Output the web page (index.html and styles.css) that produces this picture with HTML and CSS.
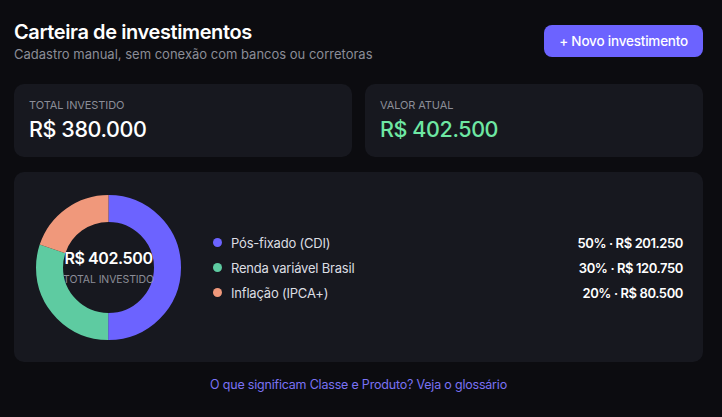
FILE: index.html
```html
<!DOCTYPE html>
<html lang="pt-BR">
<head>
<meta charset="utf-8">
<title>Carteira de investimentos</title>
<link rel="stylesheet" href="styles.css">
</head>
<body>
<div class="page">
  <header class="header">
    <div class="heading">
      <h1 class="title">Carteira de investimentos</h1>
      <p class="subtitle">Cadastro manual, sem conexão com bancos ou corretoras</p>
    </div>
    <button class="btn-primary">+ Novo investimento</button>
  </header>

  <section class="stats">
    <div class="card stat">
      <div class="stat-label">TOTAL INVESTIDO</div>
      <div class="stat-value">R$ 380.000</div>
    </div>
    <div class="card stat">
      <div class="stat-label">VALOR ATUAL</div>
      <div class="stat-value positive">R$ 402.500</div>
    </div>
  </section>

  <section class="card allocation">
    <div class="donut">
      <svg class="donut-svg" width="145" height="145" viewBox="0 0 145 145">
        <g transform="rotate(-90 72.5 72.5)">
          <circle cx="72.5" cy="72.5" r="59" fill="none" stroke="#6c63ff" stroke-width="27" stroke-dasharray="185.35 370.7" stroke-dashoffset="0"/>
          <circle cx="72.5" cy="72.5" r="59" fill="none" stroke="#5ecba1" stroke-width="27" stroke-dasharray="111.21 370.7" stroke-dashoffset="-185.35"/>
          <circle cx="72.5" cy="72.5" r="59" fill="none" stroke="#f0987b" stroke-width="27" stroke-dasharray="74.14 370.7" stroke-dashoffset="-296.56"/>
        </g>
      </svg>
      <div class="donut-center">
        <div class="donut-value">R$ 402.500</div>
        <div class="donut-label">TOTAL INVESTIDO</div>
      </div>
    </div>
    <ul class="legend">
      <li class="legend-row">
        <span class="dot dot-purple"></span>
        <span class="legend-name">Pós-fixado (CDI)</span>
        <span class="legend-value">50% · R$ 201.250</span>
      </li>
      <li class="legend-row">
        <span class="dot dot-green"></span>
        <span class="legend-name">Renda variável Brasil</span>
        <span class="legend-value">30% · R$ 120.750</span>
      </li>
      <li class="legend-row">
        <span class="dot dot-salmon"></span>
        <span class="legend-name">Inflação (IPCA+)</span>
        <span class="legend-value">20% · R$ 80.500</span>
      </li>
    </ul>
  </section>

  <footer class="footer">
    <a class="glossary-link" href="#">O que significam Classe e Produto? Veja o glossário</a>
  </footer>
</div>
</body>
</html>
```

FILE: styles.css
```css
* { box-sizing: border-box; }

html, body {
  margin: 0;
  padding: 0;
  background: #0c0c10;
}

body {
  font-family: Inter, "Noto Sans", sans-serif;
  color: #f4f4f6;
}

.page {
  padding: 20px 19px 0 14px;
}

.header {
  display: flex;
  justify-content: space-between;
  align-items: flex-start;
}

.title {
  margin: 0;
  font-size: 20px;
  font-weight: 600;
  line-height: 24px;
  letter-spacing: -0.4px;
  color: #ffffff;
}

.subtitle {
  margin: 2px 0 0;
  font-size: 13px;
  line-height: 17px;
  color: #8b8d97;
  letter-spacing: 0;
}

.btn-primary {
  margin-top: 5px;
  height: 32px;
  padding: 0 15px;
  border: none;
  border-radius: 8px;
  background: #6c63ff;
  color: #ffffff;
  font-family: inherit;
  font-size: 13.5px;
  font-weight: 500;
  letter-spacing: -0.2px;
}

.stats {
  display: grid;
  grid-template-columns: 1fr 1fr;
  gap: 13px;
  margin-top: 21px;
}

.card {
  background: #17181f;
  border-radius: 10px;
}

.stat {
  height: 73px;
  padding: 14px 15px;
}

.stat-label {
  font-size: 11px;
  line-height: 14px;
  color: #8b8d97;
  letter-spacing: -0.1px;
}

.stat-value {
  margin-top: 4px;
  font-size: 21.5px;
  font-weight: 500;
  line-height: 26px;
  letter-spacing: -0.4px;
  color: #ffffff;
}

.stat-value.positive {
  color: #6ee7a3;
}

.allocation {
  margin-top: 15px;
  display: flex;
  align-items: center;
  padding: 23px 20px 22px 22px;
}

.donut {
  position: relative;
  width: 145px;
  height: 145px;
  flex: 0 0 145px;
}

.donut-svg {
  display: block;
}

.donut-center {
  position: absolute;
  inset: 0;
  display: flex;
  flex-direction: column;
  align-items: center;
  justify-content: center;
  padding-bottom: 2px;
}

.donut-value {
  font-size: 16px;
  font-weight: 600;
  line-height: 20px;
  color: #ffffff;
  letter-spacing: -0.4px;
}

.donut-label {
  margin-top: 5px;
  font-size: 10.5px;
  line-height: 13px;
  color: #8b8d97;
  letter-spacing: -0.1px;
  white-space: nowrap;
}

.legend {
  list-style: none;
  margin: 0 0 0 32px;
  padding: 0;
  flex: 1;
  display: flex;
  flex-direction: column;
  gap: 5px;
}

.legend-row {
  display: flex;
  align-items: center;
  height: 20px;
  font-size: 13px;
}

.dot {
  width: 9px;
  height: 9px;
  border-radius: 50%;
  margin-right: 9px;
  flex: 0 0 9px;
}

.dot-purple { background: #6c63ff; }
.dot-green { background: #5ecba1; }
.dot-salmon { background: #f0987b; }

.legend-name {
  flex: 1;
  color: #dcdde2;
  letter-spacing: -0.2px;
}

.legend-value {
  color: #ffffff;
  font-weight: 600;
  letter-spacing: -0.4px;
}

.footer {
  margin-top: 11px;
  text-align: center;
}

.glossary-link {
  font-size: 12.5px;
  color: #7a72f4;
  text-decoration: none;
  letter-spacing: -0.2px;
}
```
